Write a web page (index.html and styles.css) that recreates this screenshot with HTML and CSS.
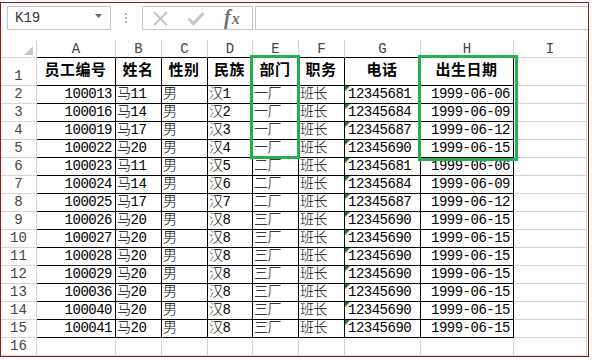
FILE: index.html
```html
<!DOCTYPE html>
<html lang="zh-CN">

<head>
    <meta charset="UTF-8">
    <title>员工信息表</title>
    <link rel="stylesheet" href="styles.css">
</head>

<body>
    <div class="window">
        <div class="formula-bar">
            <div class="name-box">
                <span>K19</span>
                <svg class="caret" width="7" height="4" viewBox="0 0 7 4"><polygon points="0,0 7,0 3.5,4" fill="#6d6d6d"/></svg>
            </div>
            <svg class="grip" width="3" height="11" viewBox="0 0 3 11">
                <rect x="0" y="0" width="2" height="2" fill="#b4b4b4"/>
                <rect x="0" y="4" width="2" height="2" fill="#b4b4b4"/>
                <rect x="0" y="8" width="2" height="2" fill="#b4b4b4"/>
            </svg>
            <div class="fx-buttons">
                <svg class="btn-cancel" width="17" height="15" viewBox="0 0 17 15">
                    <path d="M2 1 L15 14 M15 1 L2 14" stroke="#c2c2c2" stroke-width="2" fill="none"/>
                </svg>
                <svg class="btn-enter" width="18" height="15" viewBox="0 0 18 15">
                    <path d="M1.5 7.5 L6.5 12.5 L16.5 2" stroke="#c6c6c6" stroke-width="3" fill="none"/>
                </svg>
                <span class="fx"><i>f</i><i class="x">x</i></span>
            </div>
            <div class="formula-input"></div>
        </div>

        <div class="sheet">
            <table class="grid">
                <colgroup>
                    <col class="w-rn">
                    <col class="w-a">
                    <col class="w-b">
                    <col class="w-c">
                    <col class="w-d">
                    <col class="w-e">
                    <col class="w-f">
                    <col class="w-g">
                    <col class="w-h">
                    <col class="w-i">
                </colgroup>
                <tr class="head-row">
                    <td class="corner"><svg width="9" height="9" viewBox="0 0 9 9"><polygon points="9,0 9,9 0,9" fill="#c9c9c9"/></svg></td>
                    <td class="hd top">A</td>
                    <td class="hd top">B</td>
                    <td class="hd top">C</td>
                    <td class="hd top">D</td>
                    <td class="hd top">E</td>
                    <td class="hd top">F</td>
                    <td class="hd top">G</td>
                    <td class="hd top">H</td>
                    <td class="hd">I</td>
                </tr>
                <tr class="title-row">
                    <td class="rn">1</td>
                    <td class="c th">员工编号</td>
                    <td class="c th">姓名</td>
                    <td class="c th">性别</td>
                    <td class="c th">民族</td>
                    <td class="c th">部门</td>
                    <td class="c th">职务</td>
                    <td class="c th">电话</td>
                    <td class="c th">出生日期</td>
                    <td></td>
                </tr>
                <tr>
                    <td class="rn">2</td>
                    <td class="c num">100013</td><td class="c">马11</td><td class="c">男</td><td class="c">汉1</td><td class="c">一厂</td><td class="c">班长</td><td class="c tri">12345681</td><td class="c num">1999-06-06</td><td></td>
                </tr>
                <tr>
                    <td class="rn">3</td>
                    <td class="c num">100016</td><td class="c">马14</td><td class="c">男</td><td class="c">汉2</td><td class="c">一厂</td><td class="c">班长</td><td class="c tri">12345684</td><td class="c num">1999-06-09</td><td></td>
                </tr>
                <tr>
                    <td class="rn">4</td>
                    <td class="c num">100019</td><td class="c">马17</td><td class="c">男</td><td class="c">汉3</td><td class="c">一厂</td><td class="c">班长</td><td class="c tri">12345687</td><td class="c num">1999-06-12</td><td></td>
                </tr>
                <tr>
                    <td class="rn">5</td>
                    <td class="c num">100022</td><td class="c">马20</td><td class="c">男</td><td class="c">汉4</td><td class="c">一厂</td><td class="c">班长</td><td class="c tri">12345690</td><td class="c num">1999-06-15</td><td></td>
                </tr>
                <tr>
                    <td class="rn">6</td>
                    <td class="c num">100023</td><td class="c">马11</td><td class="c">男</td><td class="c">汉5</td><td class="c">二厂</td><td class="c">班长</td><td class="c tri">12345681</td><td class="c num">1999-06-06</td><td></td>
                </tr>
                <tr>
                    <td class="rn">7</td>
                    <td class="c num">100024</td><td class="c">马14</td><td class="c">男</td><td class="c">汉6</td><td class="c">二厂</td><td class="c">班长</td><td class="c tri">12345684</td><td class="c num">1999-06-09</td><td></td>
                </tr>
                <tr>
                    <td class="rn">8</td>
                    <td class="c num">100025</td><td class="c">马17</td><td class="c">男</td><td class="c">汉7</td><td class="c">二厂</td><td class="c">班长</td><td class="c tri">12345687</td><td class="c num">1999-06-12</td><td></td>
                </tr>
                <tr>
                    <td class="rn">9</td>
                    <td class="c num">100026</td><td class="c">马20</td><td class="c">男</td><td class="c">汉8</td><td class="c">三厂</td><td class="c">班长</td><td class="c tri">12345690</td><td class="c num">1999-06-15</td><td></td>
                </tr>
                <tr>
                    <td class="rn">10</td>
                    <td class="c num">100027</td><td class="c">马20</td><td class="c">男</td><td class="c">汉8</td><td class="c">三厂</td><td class="c">班长</td><td class="c tri">12345690</td><td class="c num">1999-06-15</td><td></td>
                </tr>
                <tr>
                    <td class="rn">11</td>
                    <td class="c num">100028</td><td class="c">马20</td><td class="c">男</td><td class="c">汉8</td><td class="c">三厂</td><td class="c">班长</td><td class="c tri">12345690</td><td class="c num">1999-06-15</td><td></td>
                </tr>
                <tr>
                    <td class="rn">12</td>
                    <td class="c num">100029</td><td class="c">马20</td><td class="c">男</td><td class="c">汉8</td><td class="c">三厂</td><td class="c">班长</td><td class="c tri">12345690</td><td class="c num">1999-06-15</td><td></td>
                </tr>
                <tr>
                    <td class="rn">13</td>
                    <td class="c num">100036</td><td class="c">马20</td><td class="c">男</td><td class="c">汉8</td><td class="c">三厂</td><td class="c">班长</td><td class="c tri">12345690</td><td class="c num">1999-06-15</td><td></td>
                </tr>
                <tr>
                    <td class="rn">14</td>
                    <td class="c num">100040</td><td class="c">马20</td><td class="c">男</td><td class="c">汉8</td><td class="c">三厂</td><td class="c">班长</td><td class="c tri">12345690</td><td class="c num">1999-06-15</td><td></td>
                </tr>
                <tr>
                    <td class="rn">15</td>
                    <td class="c num">100041</td><td class="c">马20</td><td class="c">男</td><td class="c">汉8</td><td class="c">三厂</td><td class="c">班长</td><td class="c tri">12345690</td><td class="c num">1999-06-15</td><td></td>
                </tr>
                <tr>
                    <td class="rn">16</td>
                    <td></td><td></td><td></td><td></td><td></td><td></td><td></td><td></td><td></td>
                </tr>
            </table>

            <!-- green highlight frames drawn over the sheet -->
            <div class="mark mark-dept"></div>
            <div class="mark mark-birth"></div>
        </div>
    </div>
</body>

</html>
```

FILE: styles.css
```css
* {
    margin: 0;
    padding: 0;
}

body {
    background: #fff;
    font-family: "Liberation Mono", "Noto Sans CJK SC", monospace;
}

.window {
    width: 587px;
    margin-top: 2px;
    border: 1px solid #8c1c1c;
    background: #fff;
}

/* formula bar */

.formula-bar {
    height: 37px;
    display: flex;
    align-items: flex-start;
    padding-top: 3px;
    box-sizing: border-box;
}

.name-box {
    width: 104px;
    height: 24px;
    margin-left: 6px;
    box-sizing: border-box;
    border: 1px solid #c6c6c6;
    display: flex;
    align-items: center;
    justify-content: space-between;
    padding: 0 8px 0 7px;
    font-family: "Liberation Mono", monospace;
    font-size: 14px;
    color: #333;
}

.caret {
    margin-top: -5px;
}

.grip {
    margin: 7px 0 0 14px;
}

.fx-buttons {
    width: 111px;
    height: 24px;
    margin-left: 14px;
    box-sizing: border-box;
    border: 1px solid #c6c6c6;
    display: flex;
    align-items: center;
}

.btn-cancel {
    margin-left: 9px;
}

.btn-enter {
    margin-left: 18px;
}

.fx {
    margin-left: 19px;
    font-family: "Liberation Serif", serif;
    font-style: italic;
    font-weight: bold;
    color: #707070;
    font-size: 20px;
    line-height: 20px;
}

.fx i {
    font-style: italic;
}

.fx .x {
    font-size: 16px;
    margin-left: 1px;
}

.formula-input {
    flex: 1;
    height: 24px;
    margin-left: 2px;
    box-sizing: border-box;
    border: 1px solid #c6c6c6;
    border-right: none;
}

/* sheet */

.sheet {
    position: relative;
}

.grid {
    border-collapse: separate;
    border-spacing: 0;
    table-layout: fixed;
    width: 586px;
}

.w-rn { width: 36px; }
.w-a { width: 79px; }
.w-b { width: 46px; }
.w-c { width: 46px; }
.w-d { width: 45px; }
.w-e { width: 46px; }
.w-f { width: 46px; }
.w-g { width: 76px; }
.w-h { width: 93px; }
.w-i { width: 73px; }

.grid tr {
    height: 18px;
}

.grid .title-row {
    height: 28px;
}

.grid td {
    box-sizing: border-box;
    border-right: 1px solid #d4d4d4;
    border-bottom: 1px solid #d4d4d4;
    padding: 0 2px 1px;
    vertical-align: bottom;
    white-space: nowrap;
    overflow: hidden;
    font-family: "Liberation Mono", "Noto Sans CJK SC", monospace;
    font-size: 14px;
    line-height: 16px;
    color: #000;
}

.grid td.corner {
    text-align: right;
    padding: 0 3px 2px 0;
    line-height: 0;
}

.grid td.hd {
    text-align: center;
    vertical-align: middle;
    color: #444;
    font-size: 14px;
    padding: 0;
}

.grid td.hd.top {
    border-bottom-color: #000;
}

.grid td.rn {
    text-align: center;
    color: #444;
    font-size: 14px;
    padding: 0 0 1px;
}

.grid td.c {
    border-right-color: #000;
    border-bottom-color: #000;
    padding-left: 1px;
    letter-spacing: -0.5px;
    font-weight: 300;
}

.grid td.th {
    text-align: center;
    font-weight: bold;
    font-size: 15px;
    line-height: 18px;
    letter-spacing: 0.5px;
    padding-bottom: 4px;
}

.grid td.num {
    text-align: right;
    padding-right: 3px;
}

.grid td.tri {
    position: relative;
    padding-left: 3px;
}

.grid td.tri::before {
    content: "";
    position: absolute;
    left: 0;
    top: 0;
    border-top: 5px solid #1f7a33;
    border-right: 5px solid transparent;
}

.mark {
    position: absolute;
    border: 3px solid #22b14c;
    box-sizing: border-box;
}

.mark-dept {
    left: 249px;
    top: 15px;
    width: 50px;
    height: 104px;
}

.mark-birth {
    left: 417px;
    top: 15px;
    width: 100px;
    height: 106px;
}
```
